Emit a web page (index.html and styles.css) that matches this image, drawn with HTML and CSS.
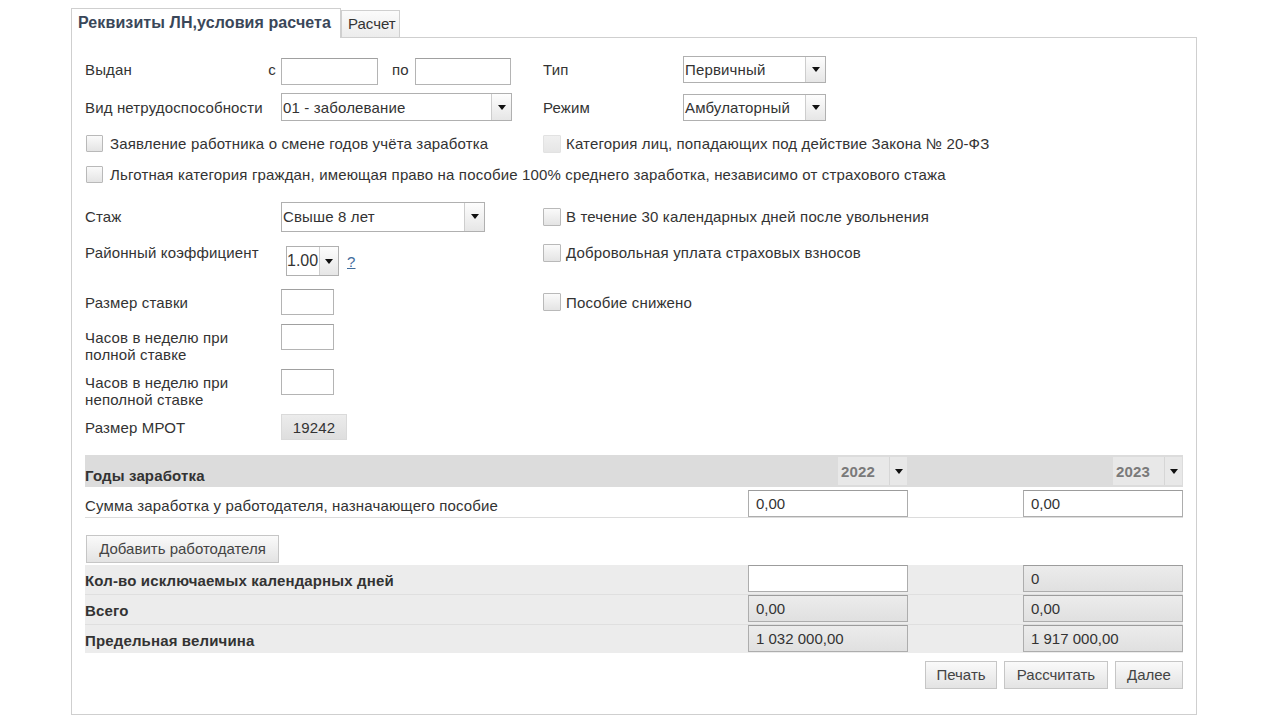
FILE: index.html
```html
<!DOCTYPE html>
<html lang="ru">
<head>
<meta charset="utf-8">
<title>Реквизиты ЛН</title>
<link rel="stylesheet" href="styles.css">
</head>
<body>
<div class="page">
  <div class="tabs">
    <div class="tab active">Реквизиты ЛН,условия расчета</div>
    <div class="tab">Расчет</div>
    <div class="tab-fill"></div>
  </div>
  <div class="panel">
    <div class="row r1">
      <div class="lcol">
        <div class="lab lab-split"><span>Выдан</span><span>с</span></div>
        <input class="inp w97" type="text">
        <span class="po">по</span>
        <input class="inp w96" type="text">
      </div>
      <div class="rcol">
        <div class="rlab">Тип</div>
        <div class="sel w143 h27"><span class="val">Первичный</span><span class="arr"></span></div>
      </div>
    </div>

    <div class="row r2">
      <div class="lcol">
        <div class="lab">Вид нетрудоспособности</div>
        <div class="sel w231 h28"><span class="val">01 - заболевание</span><span class="arr"></span></div>
      </div>
      <div class="rcol">
        <div class="rlab">Режим</div>
        <div class="sel w143 h27"><span class="val">Амбулаторный</span><span class="arr"></span></div>
      </div>
    </div>

    <div class="row r3">
      <div class="lcol">
        <label class="chk"><span class="box"></span>Заявление работника о смене годов учёта заработка</label>
      </div>
      <div class="rcol">
        <label class="chk chk-r"><span class="box disabled"></span>Категория лиц, попадающих под действие Закона № 20-ФЗ</label>
      </div>
    </div>

    <div class="row r4">
      <label class="chk"><span class="box"></span>Льготная категория граждан, имеющая право на пособие 100% среднего заработка, независимо от страхового стажа</label>
    </div>

    <div class="row r5">
      <div class="lcol">
        <div class="lab">Стаж</div>
        <div class="sel w204 h30"><span class="val">Свыше 8 лет</span><span class="arr"></span></div>
      </div>
      <div class="rcol">
        <label class="chk chk-r"><span class="box"></span>В течение 30 календарных дней после увольнения</label>
      </div>
    </div>

    <div class="row r6">
      <div class="lcol top">
        <div class="lab lh18">Районный коэффициент</div>
        <div class="coef">
          <div class="sel w53 h30"><span class="val">1.00</span><span class="arr"></span></div>
          <a class="help" href="#">?</a>
        </div>
      </div>
      <div class="rcol top">
        <label class="chk chk-r lh18"><span class="box"></span>Добровольная уплата страховых взносов</label>
      </div>
    </div>

    <div class="row r7">
      <div class="lcol">
        <div class="lab">Размер ставки</div>
        <input class="inp w53 h26" type="text">
      </div>
      <div class="rcol">
        <label class="chk chk-r"><span class="box"></span>Пособие снижено</label>
      </div>
    </div>

    <div class="row r8">
      <div class="lcol top">
        <div class="lab two">Часов в неделю при<br>полной ставке</div>
        <input class="inp w53 h26" type="text">
      </div>
    </div>

    <div class="row r9">
      <div class="lcol top">
        <div class="lab two">Часов в неделю при<br>неполной ставке</div>
        <input class="inp w53 h26" type="text">
      </div>
    </div>

    <div class="row r10">
      <div class="lcol">
        <div class="lab">Размер МРОТ</div>
        <div class="mrot">19242</div>
      </div>
    </div>

    <div class="earn">
      <div class="grid4 thead">
        <div class="tl bold">Годы заработка</div>
        <div class="tc"><div class="ysel"><span class="yv">2022</span><span class="arr"></span></div></div>
        <div></div>
        <div class="tc"><div class="ysel"><span class="yv">2023</span><span class="arr"></span></div></div>
      </div>
      <div class="grid4 tsum">
        <div class="tl">Сумма заработка у работодателя, назначающего пособие</div>
        <div><input class="tinp" type="text" value="0,00"></div>
        <div></div>
        <div><input class="tinp" type="text" value="0,00"></div>
      </div>
    </div>

    <button class="btn add" type="button">Добавить работодателя</button>

    <div class="totals">
      <div class="grid4 trow">
        <div class="tl bold">Кол-во исключаемых календарных дней</div>
        <div><input class="tinp" type="text" value=""></div>
        <div></div>
        <div><input class="tinp ro" type="text" value="0" readonly></div>
      </div>
      <div class="grid4 trow">
        <div class="tl bold">Всего</div>
        <div><input class="tinp ro" type="text" value="0,00" readonly></div>
        <div></div>
        <div><input class="tinp ro" type="text" value="0,00" readonly></div>
      </div>
      <div class="grid4 trow last">
        <div class="tl bold">Предельная величина</div>
        <div><input class="tinp ro" type="text" value="1 032 000,00" readonly></div>
        <div></div>
        <div><input class="tinp ro" type="text" value="1 917 000,00" readonly></div>
      </div>
    </div>

    <div class="actions">
      <button class="btn b-print" type="button">Печать</button>
      <button class="btn b-calc" type="button">Рассчитать</button>
      <button class="btn b-next" type="button">Далее</button>
    </div>
  </div>
</div>
</body>
</html>
```

FILE: styles.css
```css
* { box-sizing: border-box; }

body {
  margin: 0;
  background: #fff;
  font-family: "Liberation Sans", Arial, sans-serif;
  font-size: 15px;
  letter-spacing: 0.15px;
  color: #333;
}

.page {
  margin-left: 71px;
  padding-top: 8px;
  width: 1126px;
}

/* Tabs */
.tabs {
  display: flex;
  align-items: flex-end;
  height: 30px;
}
.tab {
  border: 1px solid #cfcfcf;
  color: #333;
  white-space: nowrap;
}
.tab.active {
  width: 270px;
  height: 30px;
  border-bottom: none;
  background: #fff;
  padding: 5px 0 0 6px;
  font-size: 16px;
  letter-spacing: 0.1px;
  font-weight: bold;
  color: #3a4759;
}
.tab:not(.active) {
  width: 59px;
  height: 28px;
  padding: 4px 0 0 6px;
  background: linear-gradient(#fbfbfb, #ececec);
  letter-spacing: 0;
}
.tab-fill {
  flex: 1;
  border-bottom: 1px solid #cfcfcf;
}

/* Panel */
.panel {
  border: 1px solid #cfcfcf;
  border-top: none;
  padding: 18px 13px 25px;
}

.row { display: flex; }
.lcol { width: 458px; display: flex; align-items: center; }
.rcol { display: flex; align-items: center; }
.lcol.top, .rcol.top { align-items: flex-start; }

.r1 { height: 29px; align-items: flex-start; }
.r1 .lcol, .r1 .rcol { align-items: flex-start; }
.r1 .lab, .r1 .rlab, .r1 .po { line-height: 27px; }
.r1 .inp { margin-top: 2px; }
.r2 { margin-top: 7px; height: 30px; align-items: center; }
.r3 { margin-top: 12px; height: 19px; align-items: center; }
.r4 { margin-top: 12px; height: 19px; align-items: center; }
.r5 { margin-top: 17px; height: 31px; align-items: center; }
.r6 { margin-top: 12px; height: 33px; align-items: flex-start; }
.r7 { margin-top: 11px; height: 28px; align-items: center; }
.r8 { margin-top: 8px; height: 45px; align-items: flex-start; }
.r9 { height: 45px; align-items: flex-start; }
.r10 { height: 26px; align-items: center; }

.lab { width: 196px; flex: none; white-space: nowrap; }
.lab-split { display: flex; justify-content: space-between; padding-right: 5px; }
.lab.lh18 { line-height: 18px; }
.lab.two { line-height: 17px; padding-top: 5px; }
.rlab { width: 140px; }

.po { margin: 0 6px 0 14px; }

.inp {
  height: 27px;
  border: 1px solid #b4b4b4;
  border-top-color: #a0a0a0;
  background: #fff;
  font: inherit;
  padding: 0 4px;
  margin: 0;
}
.w97 { width: 97px; }
.w96 { width: 96px; }
.w53 { width: 53px; }
.h26 { height: 26px; }

/* Select look */
.sel {
  display: flex;
  border: 1px solid #b0b0b0;
  background: #fff;
}
.sel .val {
  flex: 1;
  display: flex;
  align-items: center;
  padding-left: 1px;
  white-space: nowrap;
  overflow: hidden;
}
.sel .arr {
  width: 20px;
  flex: none;
  border-left: 1px solid #cdcdcd;
  background: linear-gradient(#fdfdfd, #e6e6e6);
  display: flex;
  align-items: center;
  justify-content: center;
}
.arr::after {
  content: "";
  width: 0;
  height: 0;
  border-left: 4px solid transparent;
  border-right: 4px solid transparent;
  border-top: 5px solid #111;
}
.w143 { width: 143px; }
.w231 { width: 231px; }
.w204 { width: 204px; }
.sel.w53 { width: 53px; }
.sel.w53 .val { padding-left: 0; font-size: 16px; letter-spacing: 0; }
.sel.w53 .arr { width: 19px; }
.h27 { height: 27px; }
.h28 { height: 28px; }
.h30 { height: 30px; }

.coef {
  display: flex;
  align-items: center;
  margin: 2px 0 0 5px;
}
.help {
  margin-left: 8px;
  color: #3f6c9c;
  text-decoration: underline;
}

/* Checkboxes */
.chk {
  display: flex;
  align-items: center;
  white-space: nowrap;
}
.chk.lh18 { line-height: 18px; }
.box {
  width: 17px;
  height: 17px;
  margin: 0 7px 0 1px;
  border: 1px solid #b9b9b9;
  border-radius: 1px;
  background: linear-gradient(#fafafa, #e4e4e4);
  flex: none;
}
.chk-r .box { margin: 0 5px 0 0; width: 18px; height: 18px; }
.box.disabled {
  border-color: #e2e2e2;
  background: linear-gradient(#f0f0f0, #e6e6e6);
}

.mrot {
  width: 66px;
  height: 26px;
  background: linear-gradient(#ececec, #dedede);
  border: 1px solid #dadada;
  display: flex;
  align-items: center;
  justify-content: center;
}

/* Earnings table */
.earn { margin-top: 15px; }
.grid4 {
  display: grid;
  grid-template-columns: 663px 160px 115px 160px;
}
.bold { font-weight: bold; }
.thead {
  height: 32px;
  background: #dcdcdc;
}
.thead .tl { align-self: end; padding-bottom: 3px; line-height: 17px; }
.tc { display: flex; justify-content: flex-end; align-items: center; padding-right: 1px; }
.ysel {
  display: flex;
  width: 69px;
  height: 28px;
  background: #e8e8e8;
}
.ysel .yv {
  flex: 1;
  display: flex;
  align-items: center;
  padding-left: 3px;
  font-weight: bold;
  color: #7a7a7a;
}
.ysel .arr {
  width: 18px;
  border-left: 1px solid #d6d6d6;
  display: flex;
  align-items: center;
  justify-content: center;
}

.tsum {
  height: 31px;
  border-bottom: 1px solid #dcdcdc;
  padding-top: 3px;
}
.tsum .tl { align-self: end; padding-bottom: 3px; line-height: 17px; }

.tinp {
  width: 160px;
  height: 27px;
  margin: 0;
  border: 1px solid #adadad;
  border-top-color: #9c9c9c;
  background: #fff;
  font: inherit;
  color: #333;
  padding: 0 7px;
}
.tinp.ro {
  background: linear-gradient(#ececec, #e0e0e0);
}

.btn {
  height: 28px;
  margin: 0;
  padding: 0 0 2px;
  border: 1px solid #c6c6c6;
  background: linear-gradient(#fafafa, #e3e3e3);
  font: inherit;
  color: #444;
}
.add {
  display: block;
  margin: 17px 0 0 1px;
  width: 193px;
}

.totals {
  margin-top: 2px;
  background: #ececec;
}
.trow {
  height: 30px;
  border-bottom: 1px solid #dfdfdf;
}
.trow.last { height: 28px; border-bottom: none; }
.trow .tl { padding-top: 7px; line-height: 17px; }

.actions {
  display: flex;
  justify-content: flex-end;
  gap: 7px;
  margin-top: 8px;
}
.b-print { width: 72px; }
.b-calc { width: 104px; }
.b-next { width: 68px; }
```
